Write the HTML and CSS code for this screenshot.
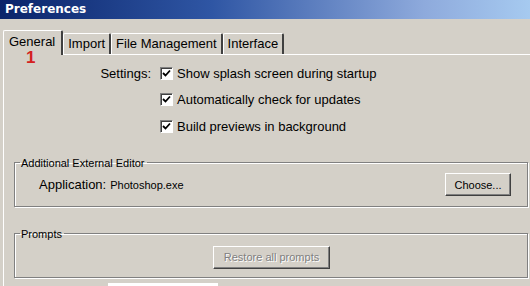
FILE: index.html
```html
<!DOCTYPE html>
<html>
<head>
<meta charset="utf-8">
<link rel="stylesheet" href="styles.css">
</head>
<body>
<div class="window">
  <div class="titlebar">Preferences</div>
  <div class="tabstrip">
    <div class="tab active">General<span class="marker">1</span></div>
    <div class="tab">Import</div>
    <div class="tab">File Management</div>
    <div class="tab">Interface</div>
  </div>
  <div class="panel">
    <div class="settings">
      <div class="label">Settings:</div>
      <div class="check"><span class="box"><svg width="9" height="9" viewBox="0 0 9 9"><path d="M1 4 L3.5 6.5 L8 1.5" fill="none" stroke="#000" stroke-width="1.8"/></svg></span>Show splash screen during startup</div>
      <div></div>
      <div class="check"><span class="box"><svg width="9" height="9" viewBox="0 0 9 9"><path d="M1 4 L3.5 6.5 L8 1.5" fill="none" stroke="#000" stroke-width="1.8"/></svg></span>Automatically check for updates</div>
      <div></div>
      <div class="check"><span class="box"><svg width="9" height="9" viewBox="0 0 9 9"><path d="M1 4 L3.5 6.5 L8 1.5" fill="none" stroke="#000" stroke-width="1.8"/></svg></span>Build previews in background</div>
    </div>
    <fieldset class="group editor">
      <legend>Additional External Editor</legend>
      <div class="app-row">
        <span class="app-label">Application:</span>
        <span class="app-value">Photoshop.exe</span>
        <button class="btn choose">Choose...</button>
      </div>
    </fieldset>
    <fieldset class="group prompts">
      <legend>Prompts</legend>
      <div class="prompt-row">
        <button class="btn disabled">Restore all prompts</button>
      </div>
    </fieldset>
    <div class="below"><div class="below-box"></div></div>
  </div>
</div>
</body>
</html>
```
FILE: styles.css
```css
html, body {
  margin: 0;
  padding: 0;
  background: #d4d0c8;
  overflow: hidden;
}
body {
  width: 530px;
  height: 286px;
  font-family: "Liberation Sans", Arial, sans-serif;
  font-size: 13px;
  color: #000;
}
.titlebar {
  height: 19px;
  line-height: 19px;
  padding-left: 5px;
  color: #fff;
  font-weight: bold;
  font-size: 12px;
  font-family: "DejaVu Sans", sans-serif;
  background: linear-gradient(to right, #0a246a 0%, #2f56a4 40%, #8eaadc 80%, #a6caf0 100%);
}
.tabstrip {
  display: flex;
  align-items: flex-end;
  height: 35px;
  padding-left: 3px;
  position: relative;
  z-index: 2;
}
.tab {
  height: 21px;
  line-height: 20px;
  padding: 0 4px;
  font-size: 13px;
  border-top: 1px solid #fff;
  border-left: 1px solid #fff;
  border-right: 2px solid #404040;
  box-sizing: border-box;
  border-radius: 2px 2px 0 0;
}
.tab.active {
  height: 25px;
  padding: 2px 6px 0 5px;
  line-height: 18px;
  background: #d4d0c8;
  margin-bottom: -1px;
  position: relative;
}
.marker {
  position: absolute;
  left: 22px;
  top: 20px;
  color: #d42020;
  font-weight: bold;
  font-size: 17px;
  line-height: 13px;
}
.panel {
  margin-left: 3px;
  border-top: 1px solid #fff;
  border-left: 1px solid #fff;
  height: 240px;
  position: relative;
}
.settings {
  display: grid;
  grid-template-columns: 147px auto;
  column-gap: 9px;
  margin-top: 5px;
}
.settings > div {
  height: 26.5px;
  display: flex;
  align-items: center;
}
.label {
  justify-content: flex-end;
}
.check {
  gap: 4px;
}
.box {
  width: 13px;
  height: 13px;
  box-sizing: border-box;
  background: #fff;
  border-top: 1px solid #808080;
  border-left: 1px solid #808080;
  border-right: 1px solid #fff;
  border-bottom: 1px solid #fff;
  box-shadow: inset 1px 1px 0 #404040;
  display: inline-flex;
  align-items: center;
  justify-content: center;
}
.group {
  margin: 0 0 0 10px;
  padding: 0;
  border: 1px solid #808080;
  box-shadow: inset 1px 1px 0 #fff, 1px 1px 0 #fff;
  width: 514px;
  box-sizing: border-box;
  height: 50px;
}
.group legend {
  font-size: 11px;
  padding: 0 2px 0 1px;
  margin-left: 5px;
  line-height: 12px;
}
.editor {
  margin-top: 17px;
}
.app-row {
  display: flex;
  align-items: center;
  height: 24px;
  margin-top: 4px;
  padding-left: 24px;
  padding-right: 16px;
}
.app-value {
  font-size: 11px;
  margin-left: 4px;
  flex: 1;
}
.btn {
  font-family: "Liberation Sans", Arial, sans-serif;
  font-size: 11px;
  background: #d4d0c8;
  color: #000;
  border: 1px solid;
  border-color: #fff #404040 #404040 #fff;
  box-shadow: inset -1px -1px 0 #808080;
  height: 23px;
  padding: 0;
}
.choose {
  width: 66px;
}
.prompts {
  margin-top: 21px;
}
.prompt-row {
  display: flex;
  margin-top: 6px;
  padding-left: 198px;
}
.disabled {
  width: 117px;
  color: #808080;
  text-shadow: 1px 1px 0 #fff;
}
.below {
  padding-left: 104px;
  margin-top: 5px;
}
.below-box {
  width: 110px;
  height: 4px;
  background: #fff;
}
```
